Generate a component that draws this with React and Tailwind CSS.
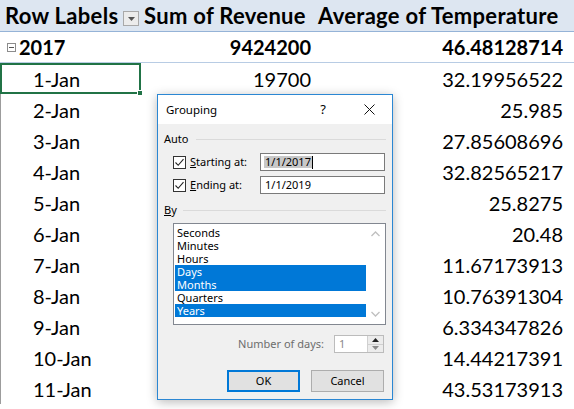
import React from "react";

const rows = [
  ["2-Jan", "", "25.985"],
  ["3-Jan", "", "27.85608696"],
  ["4-Jan", "", "32.82565217"],
  ["5-Jan", "", "25.8275"],
  ["6-Jan", "", "20.48"],
  ["7-Jan", "", "11.67173913"],
  ["8-Jan", "", "10.76391304"],
  ["9-Jan", "", "6.334347826"],
  ["10-Jan", "", "14.44217391"],
  ["11-Jan", "", "43.53173913"],
];

function Check() {
  return (
    <div className="w-[13px] h-[13px] border border-[#333333] bg-white flex items-center justify-center shrink-0">
      <svg width="11" height="11" viewBox="0 0 11 11">
        <path d="M1.5 5.5 L4.2 8.3 L9.5 2.2" fill="none" stroke="#222" strokeWidth="1.1" />
      </svg>
    </div>
  );
}

function Dialog() {
  const items = [
    ["Seconds", false],
    ["Minutes", false],
    ["Hours", false],
    ["Days", true],
    ["Months", true],
    ["Quarters", false],
    ["Years", true],
  ];
  return (
    <div className="absolute left-[157px] top-[94px] w-[236px] h-[306px] border border-[#2b87d3] bg-[#f0f0f0] shadow-[0_2px_10px_rgba(0,0,0,0.28)] font-['Noto_Sans',sans-serif] text-[11px] text-black flex flex-col">
      <div className="h-[29px] bg-white flex items-center shrink-0">
        <div className="flex-1 pl-[8px] text-[11.5px]">Grouping</div>
        <div className="w-[46px] h-full flex items-center justify-center text-[13px]">?</div>
        <div className="w-[46px] h-full flex items-center justify-center">
          <svg width="11" height="11" viewBox="0 0 11 11">
            <path d="M0.5 0.5 L10.5 10.5 M10.5 0.5 L0.5 10.5" stroke="#111" strokeWidth="1" />
          </svg>
        </div>
      </div>

      <div className="mt-[7px] h-[16px] flex items-center pl-[6px] pr-[6px]">
        <span>Auto</span>
        <div className="flex-1 ml-[8px] border-t border-[#dadada]" />
      </div>

      <div className="mt-[6px] h-[18px] flex items-center pl-[15px] pr-[7px]">
        <Check />
        <span className="ml-[4px]"><span className="underline">S</span>tarting at:</span>
        <div className="ml-auto w-[125px] h-[18px] border border-[#7a7a7a] bg-white flex items-center pl-[3px]">
          <span className="bg-[#c8c8c8] leading-[12px] px-[1px]">1/1/2017</span>
          <span className="w-[1px] h-[13px] bg-black" />
        </div>
      </div>

      <div className="mt-[5px] h-[18px] flex items-center pl-[15px] pr-[7px]">
        <Check />
        <span className="ml-[4px]"><span className="underline">E</span>nding at:</span>
        <div className="ml-auto w-[125px] h-[18px] border border-[#7a7a7a] bg-white flex items-center pl-[4px]">
          1/1/2019
        </div>
      </div>

      <div className="mt-[8px] h-[16px] flex items-center pl-[6px] pr-[6px]">
        <span><span className="underline">B</span>y</span>
        <div className="flex-1 ml-[6px] border-t border-[#dadada]" />
      </div>

      <div className="mt-[5px] ml-[15px] mr-[6px] h-[102px] border border-[#828790] bg-white flex p-[1px]">
        <div className="w-[191px] pt-[1px]">
          {items.map(([t, sel]) => (
            <div
              key={t}
              className={
                "h-[13px] leading-[13px] pl-[2px] " +
                (sel ? "bg-[#0078d7] text-white" : "")
              }
            >
              {t}
            </div>
          ))}
        </div>
        <div className="flex-1 flex flex-col justify-between items-center py-[6px]">
          <svg width="9" height="6" viewBox="0 0 9 6">
            <path d="M0.5 5 L4.5 1 L8.5 5" fill="none" stroke="#bfbfbf" strokeWidth="1.3" />
          </svg>
          <svg width="9" height="6" viewBox="0 0 9 6">
            <path d="M0.5 1 L4.5 5 L8.5 1" fill="none" stroke="#bfbfbf" strokeWidth="1.3" />
          </svg>
        </div>
      </div>

      <div className="mt-[10px] h-[18px] flex items-center justify-end pr-[8px]">
        <span className="text-[#6d6d6d]">Number of days:</span>
        <div className="ml-[10px] w-[50px] h-[18px] border border-[#bcbcbc] bg-white flex">
          <div className="flex-1 pl-[4px] text-[#8a8a8a] leading-[16px]">1</div>
          <div className="w-[16px] flex flex-col border-l border-[#d0d0d0]">
            <div className="flex-1 bg-[#ececec] border-b border-[#d0d0d0] flex items-center justify-center">
              <svg width="7" height="4" viewBox="0 0 7 4"><path d="M0 4 L3.5 0 L7 4 Z" fill="#222" /></svg>
            </div>
            <div className="flex-1 bg-[#ececec] flex items-center justify-center">
              <svg width="7" height="4" viewBox="0 0 7 4"><path d="M0 0 L3.5 4 L7 0 Z" fill="#8a8a8a" /></svg>
            </div>
          </div>
        </div>
      </div>

      <div className="mt-[17px] h-[22px] flex justify-end gap-[11px] pr-[8px]">
        <div className="w-[73px] h-[22px] border-2 border-[#0078d7] bg-[#e1e1e1] flex items-center justify-center">OK</div>
        <div className="w-[73px] h-[22px] border border-[#adadad] bg-[#e1e1e1] flex items-center justify-center">Cancel</div>
      </div>
    </div>
  );
}

export default function App() {
  return (
    <div className="relative w-[574px] h-[409px] overflow-hidden bg-white font-['Lato',sans-serif] text-[20px] text-black">
      <div className="h-[32px] flex items-center bg-[#dde6f1] border-b border-[#95b3d7] font-bold text-[22px] tracking-[0.3px]">
        <div className="w-[141px] flex items-center pl-[5px] pr-[2px]">
          <span>Row Labels</span>
          <div className="ml-auto w-[16px] h-[15px] border border-[#a9a9a9] bg-[#ececec] flex items-center justify-center mt-[6px]">
            <svg width="7" height="4" viewBox="0 0 7 4"><path d="M0 0 L3.5 4 L7 0 Z" fill="#555" /></svg>
          </div>
        </div>
        <div className="w-[174px] pl-[3px]">Sum of Revenue</div>
        <div className="flex-1 pl-[3px]">Average of Temperature</div>
      </div>

      <div className="h-[31px] flex items-center border-b border-[#b8cce4] font-bold">
        <div className="w-[141px] flex items-center pl-[7px]">
          <div className="w-[9px] h-[9px] border border-[#8c8c8c] flex items-center justify-center mr-[3px]">
            <div className="w-[5px] h-[1px] bg-[#555]" />
          </div>
          <span>2017</span>
        </div>
        <div className="w-[170px] text-right">9424200</div>
        <div className="flex-1 text-right pr-[11px]">46.48128714</div>
      </div>

      <div className="h-[31px] flex items-center">
        <div className="relative w-[141px] h-[31px] border-2 border-[#217346] flex items-center pl-[31px]">
          <span>1-Jan</span>
          <div className="absolute right-[-4px] bottom-[-4px] w-[6px] h-[6px] bg-[#217346] border border-white" />
        </div>
        <div className="w-[170px] text-right">19700</div>
        <div className="flex-1 text-right pr-[11px]">32.19956522</div>
      </div>

      {rows.map(([a, b, c]) => (
        <div key={a} className="h-[31px] flex items-center">
          <div className="w-[141px] h-full flex items-center pl-[32px] border-l border-[#9c9c9c]">{a}</div>
          <div className="w-[170px] text-right">{b}</div>
          <div className="flex-1 text-right pr-[11px]">{c}</div>
        </div>
      ))}

      <Dialog />
    </div>
  );
}
